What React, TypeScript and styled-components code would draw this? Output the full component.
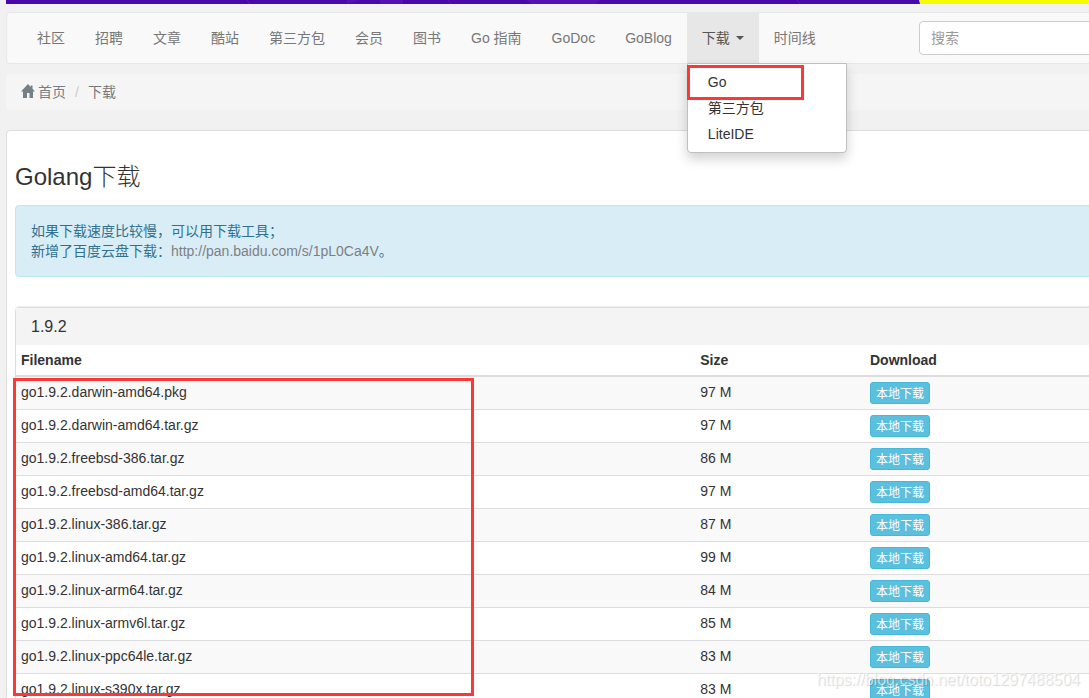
import React from "react";
import styled, { createGlobalStyle, css } from "styled-components";

const GlobalStyle = createGlobalStyle`
  *, *::before, *::after { box-sizing: border-box; }
  body {
    margin: 0;
    background: #f1f1f1;
    color: #333;
    font-family: "Liberation Sans", "Noto Sans CJK SC", sans-serif;
    font-size: 14px;
    font-weight: 400;
    line-height: 20px;
  }
  a { color: inherit; text-decoration: none; }
`;

const Viewport = styled.div`
  position: relative;
  height: 100vh;
  overflow: hidden;
`;

const Page = styled.div`
  margin: 0 -69px 0 6px;
`;

const Banner = styled.div`
  display: flex;
  height: 4px;
  margin-bottom: 8px;
  background: #f8fa00;
`;

const BannerArt = styled.svg`
  flex: 1;
  min-width: 0;
  height: 4px;
  display: block;
  background: #4807ab;
`;

const BannerEnd = styled.div`
  width: 238px;
`;

const Navbar = styled.nav`
  display: flex;
  align-items: center;
  padding-left: 15px;
  background: #f9f9f9;
  border: 1px solid #e7e7e7;
  border-radius: 4px;
`;

const NavList = styled.ul`
  display: flex;
  margin: 0;
  padding: 0;
  list-style: none;
`;

const NavItem = styled.li`
  position: relative;
`;

const NavLink = styled.a<{ $active?: boolean }>`
  display: flex;
  align-items: center;
  gap: 6px;
  padding: 15px;
  white-space: nowrap;
  color: #777;
  ${(p) =>
    p.$active &&
    css`
      background: #e7e7e7;
      color: #555;
    `}
`;

const Caret = styled.span`
  border-top: 4px solid currentColor;
  border-left: 4px solid transparent;
  border-right: 4px solid transparent;
`;

const Menu = styled.ul`
  position: absolute;
  top: 100%;
  left: 0;
  z-index: 10;
  width: 160px;
  margin: 0;
  padding: 5px 0;
  list-style: none;
  background: #fff;
  border: 1px solid #bfbfbf;
  border-radius: 0 0 4px 4px;
  box-shadow: 0 6px 12px rgba(0, 0, 0, 0.18);
`;

const MenuLink = styled.a`
  display: block;
  padding: 3px 20px;
`;

const Highlight = styled.div<{ $area: "menu" | "files" }>`
  position: absolute;
  z-index: 11;
  border: 3px solid #fd3636;
  pointer-events: none;
  ${(p) =>
    p.$area === "menu"
      ? css`
          top: 1px;
          left: -1px;
          width: 117px;
          height: 35px;
        `
      : css`
          top: 70px;
          left: -3px;
          width: 461px;
          height: 318px;
        `}
`;

const SearchForm = styled.form`
  width: 238px;
  margin-left: auto;
  padding-right: 15px;
`;

const SearchInput = styled.input`
  display: block;
  width: 100%;
  height: 34px;
  padding: 6px 11px;
  font: inherit;
  color: #555;
  background: #fff;
  border: 1px solid #ccc;
  border-radius: 4px;
  &::placeholder { color: #999; opacity: 1; }
`;

const Breadcrumb = styled.ol`
  display: flex;
  margin: 10px 0 20px;
  padding: 8px 15px;
  list-style: none;
  background: #f5f5f5;
  border-radius: 4px;
  color: #777;
`;

const Crumb = styled.li`
  display: flex;
  & + &::before {
    content: "/";
    padding: 0 9px;
    color: #ccc;
  }
`;

const HomeLink = styled.a`
  display: flex;
  gap: 3px;
  color: #757f87;
`;

const HomeIcon = styled.svg`
  width: 14px;
  height: 14px;
  margin-top: 2px;
`;

const Content = styled.main`
  padding: 33px 8px 20px;
  background: #fff;
  border: 1px solid #ddd;
  border-radius: 4px;
`;

const Title = styled.h1`
  margin: 0 0 15px;
  font-size: 24px;
  font-weight: 300;
  line-height: 26px;
`;

const Notice = styled.div`
  margin-bottom: 30px;
  padding: 15px;
  color: #31708f;
  background: #d9edf7;
  border: 1px solid #bce8f1;
  border-radius: 4px;
`;

const NoticeLink = styled.a`
  color: #7d7f85;
`;

const Release = styled.section`
  position: relative;
  border: 1px solid #ddd;
  border-radius: 4px;
  box-shadow: 0 -1px 0 #eee;
`;

const ReleaseTitle = styled.h2`
  margin: 0;
  padding: 10px 15px;
  font-size: 16px;
  font-weight: 400;
  line-height: 17px;
  background: #f4f4f4;
`;

const FileTable = styled.table`
  width: 100%;
  table-layout: fixed;
  border-collapse: separate;
  border-spacing: 0;
  text-align: left;
`;

const HeadCell = styled.th<{ $width: string }>`
  width: ${(p) => p.$width};
  padding: 5px;
  font-weight: bold;
  border-bottom: 2px solid #ddd;
`;

const FileRow = styled.tr`
  &:nth-child(odd) { background: #f9f9f9; }
  & + & td { border-top: 1px solid #ddd; }
`;

const Cell = styled.td`
  padding: 5px;
  vertical-align: top;
`;

const DownloadButton = styled.button`
  display: block;
  height: 22px;
  padding: 1px 5px 0;
  font: inherit;
  font-size: 12px;
  line-height: 20px;
  color: #fff;
  background: #5bc0de;
  border: 1px solid #46b8da;
  border-radius: 3px;
`;

const Watermark = styled.div`
  position: absolute;
  right: 9px;
  bottom: 8px;
  font-size: 16px;
  color: rgba(255, 255, 255, 0.6);
  text-shadow: 1px 1px 1px rgba(0, 0, 0, 0.16);
`;

const navBefore = ["社区", "招聘", "文章", "酷站", "第三方包", "会员", "图书", "Go 指南", "GoDoc", "GoBlog"];
const menuItems = ["Go", "第三方包", "LiteIDE"];
const files: [string, string][] = [
  ["go1.9.2.darwin-amd64.pkg", "97 M"],
  ["go1.9.2.darwin-amd64.tar.gz", "97 M"],
  ["go1.9.2.freebsd-386.tar.gz", "86 M"],
  ["go1.9.2.freebsd-amd64.tar.gz", "97 M"],
  ["go1.9.2.linux-386.tar.gz", "87 M"],
  ["go1.9.2.linux-amd64.tar.gz", "99 M"],
  ["go1.9.2.linux-arm64.tar.gz", "84 M"],
  ["go1.9.2.linux-armv6l.tar.gz", "85 M"],
  ["go1.9.2.linux-ppc64le.tar.gz", "83 M"],
  ["go1.9.2.linux-s390x.tar.gz", "83 M"],
];

export default function App() {
  return (
    <Viewport lang="zh-CN">
      <GlobalStyle />
      <Page>
        <Banner>
          <BannerArt viewBox="0 0 914 4" preserveAspectRatio="none" aria-hidden="true">
            <path d="M341 4V0H354L348 2ZM374 0H397V4H374ZM520 0H594L590 4H526Z" fill="#560fb5" />
            <path d="M241 0L244 4M442 0L445 4M791 0L794 4" stroke="#6a12c4" />
            <path d="M913 0H914V4Z" fill="#f8fa00" />
          </BannerArt>
          <BannerEnd />
        </Banner>

        <Navbar>
          <NavList>
            {navBefore.map((label) => (
              <NavItem key={label}>
                <NavLink href="#">{label}</NavLink>
              </NavItem>
            ))}
            <NavItem>
              <NavLink href="#" $active>
                下载
                <Caret />
              </NavLink>
              <Menu>
                {menuItems.map((label) => (
                  <li key={label}>
                    <MenuLink href="#">{label}</MenuLink>
                  </li>
                ))}
                <Highlight as="li" $area="menu" aria-hidden="true" />
              </Menu>
            </NavItem>
            <NavItem>
              <NavLink href="#">时间线</NavLink>
            </NavItem>
          </NavList>
          <SearchForm role="search">
            <SearchInput type="text" placeholder="搜索" aria-label="搜索" />
          </SearchForm>
        </Navbar>

        <Breadcrumb>
          <Crumb>
            <HomeLink href="#">
              <HomeIcon viewBox="0 0 14 14" fill="currentColor" aria-hidden="true">
                <path d="M7 0L0 7.500H2V14H6V9H8.500V14H12V7.500H14L11.500 4.800V1.500H9.800V3Z" />
              </HomeIcon>
              首页
            </HomeLink>
          </Crumb>
          <Crumb>下载</Crumb>
        </Breadcrumb>

        <Content>
          <Title>Golang下载</Title>
          <Notice>
            如果下载速度比较慢，可以用下载工具；
            <br />
            新增了百度云盘下载：
            <NoticeLink href="#">http://pan.baidu.com/s/1pL0Ca4V</NoticeLink>。
          </Notice>
          <Release>
            <ReleaseTitle>1.9.2</ReleaseTitle>
            <FileTable>
              <thead>
                <tr>
                  <HeadCell $width="60%">Filename</HeadCell>
                  <HeadCell $width="15%">Size</HeadCell>
                  <HeadCell $width="25%">Download</HeadCell>
                </tr>
              </thead>
              <tbody>
                {files.map(([name, size]) => (
                  <FileRow key={name}>
                    <Cell>
                      <a href="#">{name}</a>
                    </Cell>
                    <Cell>{size}</Cell>
                    <Cell>
                      <DownloadButton type="button">本地下载</DownloadButton>
                    </Cell>
                  </FileRow>
                ))}
              </tbody>
            </FileTable>
            <Highlight $area="files" aria-hidden="true" />
          </Release>
        </Content>
      </Page>
      <Watermark>https://blog.csdn.net/toto1297488504</Watermark>
    </Viewport>
  );
}
